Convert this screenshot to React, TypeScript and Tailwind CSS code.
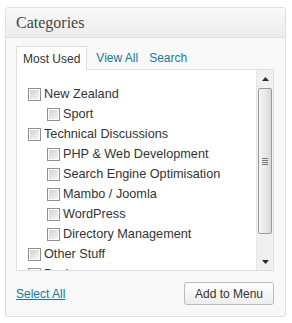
import React from 'react'

interface Item {
  label: string
  indent?: boolean
}

const items: Item[] = [
  { label: 'New Zealand' },
  { label: 'Sport', indent: true },
  { label: 'Technical Discussions' },
  { label: 'PHP & Web Development', indent: true },
  { label: 'Search Engine Optimisation', indent: true },
  { label: 'Mambo / Joomla', indent: true },
  { label: 'WordPress', indent: true },
  { label: 'Directory Management', indent: true },
  { label: 'Other Stuff' },
  { label: 'Business' },
]

const Checkbox: React.FC = () => (
  <span className="w-[13px] h-[13px] shrink-0 border border-[#8f8f8f] bg-white p-px">
    <span className="block w-full h-full bg-gradient-to-br from-[#d2d2d2] to-[#f4f4f4]" />
  </span>
)

const Scrollbar: React.FC = () => (
  <div className="w-[17px] h-full shrink-0 flex flex-col bg-[#f0f0f0] border-l border-[#e6e6e6]">
    {/* up arrow */}
    <div className="h-[17px] flex items-center justify-center">
      <svg width="7" height="4" viewBox="0 0 7 4">
        <path d="M0 4 L3.5 0 L7 4 Z" fill="#2b2b2b" />
      </svg>
    </div>
    {/* thumb */}
    <div className="mx-px mt-px h-[146px] rounded-[2px] border border-[#9a9a9a] bg-gradient-to-r from-[#f4f4f4] via-[#e9e9e9] to-[#d8d8d8] flex items-center justify-center">
      <div className="flex flex-col gap-[1px]">
        <span className="block w-[6px] h-px bg-[#7a7a7a]" />
        <span className="block w-[6px] h-px bg-[#7a7a7a]" />
        <span className="block w-[6px] h-px bg-[#7a7a7a]" />
        <span className="block w-[6px] h-px bg-[#7a7a7a]" />
      </div>
    </div>
    <div className="flex-1" />
    {/* down arrow */}
    <div className="h-[17px] flex items-center justify-center">
      <svg width="7" height="4" viewBox="0 0 7 4">
        <path d="M0 0 L7 0 L3.5 4 Z" fill="#2b2b2b" />
      </svg>
    </div>
  </div>
)

export default function App() {
  return (
    <div className="w-[292px] h-[323px] bg-white pt-[7px] pl-[5px] font-['Liberation_Sans',Arial,sans-serif]">
      <div className="w-[281px] h-[310px] border border-[#dfdfdf] rounded-[3px] bg-[#f8f8f8] flex flex-col overflow-hidden">
        {/* Header */}
        <div className="h-[30px] shrink-0 border-b border-[#dfdfdf] bg-gradient-to-b from-[#f9f9f9] to-[#ececec] flex items-center pl-[10px]">
          <h3 className="text-[16px] leading-none text-[#464646] font-['Liberation_Serif',Georgia,serif]">Categories</h3>
        </div>

        <div className="flex-1 px-[10px] pt-[8px]">
          {/* Tabs */}
          <div className="flex items-end h-[23px] text-[12px]">
            <div className="h-[24px] -mb-px relative z-10 px-[6px] border border-b-0 border-[#dfdfdf] bg-white flex items-center text-[#333]">
              Most Used
            </div>
            <span className="ml-[9px] h-[23px] flex items-center text-[#21759b]">View All</span>
            <span className="ml-[11px] h-[23px] flex items-center text-[#21759b]">Search</span>
          </div>

          {/* List */}
          <div className="w-[258px] h-[202px] border border-[#dfdfdf] bg-white flex overflow-hidden">
            <div className="flex-1 pt-[14px] pl-[11px] overflow-hidden">
              {items.map((item) => (
                <div
                  key={item.label}
                  className={`h-[20px] flex items-center gap-[3px] text-[12.7px] leading-[16px] text-[#333] whitespace-nowrap ${item.indent ? 'pl-[19px]' : ''}`}
                >
                  <Checkbox />
                  <span>{item.label}</span>
                </div>
              ))}
            </div>
            <Scrollbar />
          </div>

          {/* Footer */}
          <div className="flex items-center justify-between mt-[11px] w-[258px]">
            <a href="#" className="text-[12px] text-[#21759b] underline">Select All</a>
            <button
              type="button"
              className="w-[90px] h-[23px] border border-[#bbb] rounded-[3px] bg-gradient-to-b from-white to-[#ededed] text-[12px] text-[#333]"
            >
              Add to Menu
            </button>
          </div>
        </div>
      </div>
    </div>
  )
}
